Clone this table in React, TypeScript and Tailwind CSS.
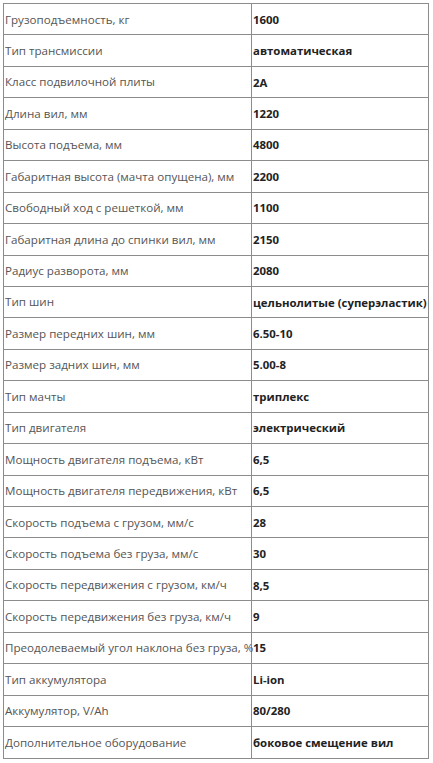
const rows: [string, string][] = [
  ['Грузоподъемность, кг', '1600'],
  ['Тип трансмиссии', 'автоматическая'],
  ['Класс подвилочной плиты', '2A'],
  ['Длина вил, мм', '1220'],
  ['Высота подъема, мм', '4800'],
  ['Габаритная высота (мачта опущена), мм', '2200'],
  ['Свободный ход с решеткой, мм', '1100'],
  ['Габаритная длина до спинки вил, мм', '2150'],
  ['Радиус разворота, мм', '2080'],
  ['Тип шин', 'цельнолитые (суперэластик)'],
  ['Размер передних шин, мм', '6.50-10'],
  ['Размер задних шин, мм', '5.00-8'],
  ['Тип мачты', 'триплекс'],
  ['Тип двигателя', 'электрический'],
  ['Мощность двигателя подъема, кВт', '6,5'],
  ['Мощность двигателя передвижения, кВт', '6,5'],
  ['Скорость подъема с грузом, мм/с', '28'],
  ['Скорость подъема без груза, мм/с', '30'],
  ['Скорость передвижения с грузом, км/ч', '8,5'],
  ['Скорость передвижения без груза, км/ч', '9'],
  ['Преодолеваемый угол наклона без груза, %', '15'],
  ['Тип аккумулятора', 'Li-ion'],
  ['Аккумулятор, V/Ah', '80/280'],
  ['Дополнительное оборудование', 'боковое смещение вил'],
]

export default function App() {
  return (
    <div className="bg-white min-h-screen pt-[3px] pl-[3px]" style={{ fontFamily: '"Open Sans", sans-serif' }}>
      <table className="border-collapse w-[426px] table-fixed">
        <tbody>
          {rows.map(([label, value], i) => (
            <tr key={i} className="h-[31.45px]">
              <td className="w-[248px] border border-[#8c8c8c] px-px py-0 align-middle text-[11.6px] text-[#555] whitespace-nowrap">
                {label}
              </td>
              <td className="border border-[#8c8c8c] px-px py-0 align-middle text-[11.4px] font-bold text-[#222] whitespace-nowrap">
                {value}
              </td>
            </tr>
          ))}
        </tbody>
      </table>
    </div>
  )
}
